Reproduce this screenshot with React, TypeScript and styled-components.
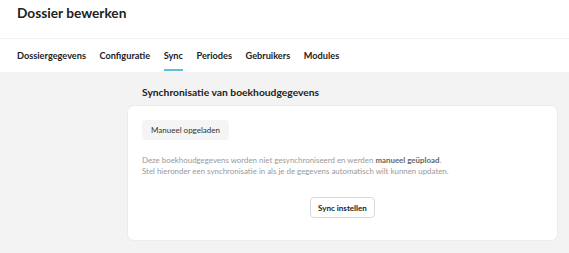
import styled, { createGlobalStyle } from "styled-components";

const GlobalStyle = createGlobalStyle`
  body {
    margin: 0;
    font-family: Lato, "Open Sans", sans-serif;
    color: #222;
    background: #f3f3f3;
  }
`;

const tabs = ["Dossiergegevens", "Configuratie", "Sync", "Periodes", "Gebruikers", "Modules"];

const App = () => {
  return (
    <Page>
      <GlobalStyle />
      <TopBar>
        <Title>Dossier bewerken</Title>
      </TopBar>
      <TabBar>
        {tabs.map((tab) => (
          <Tab key={tab} $active={tab === "Sync"}>
            {tab}
          </Tab>
        ))}
      </TabBar>
      <Content>
        <Section>
          <SectionTitle>Synchronisatie van boekhoudgegevens</SectionTitle>
          <Card>
            <StatusChip>Manueel opgeladen</StatusChip>
            <Description>
              Deze boekhoudgegevens worden niet gesynchroniseerd en werden{" "}
              <strong>manueel geüpload</strong>.
              <br />
              Stel hieronder een synchronisatie in als je de gegevens automatisch wilt kunnen updaten.
            </Description>
            <Actions>
              <OutlineButton>Sync instellen</OutlineButton>
            </Actions>
          </Card>
        </Section>
      </Content>
    </Page>
  );
};

const Page = styled.div`
  min-height: 100vh;
  display: flex;
  flex-direction: column;
`;

const TopBar = styled.div`
  background: #fff;
  height: 38px;
  padding: 0 17px;
  border-bottom: 1px solid #f2f2f2;
`;

const Title = styled.h1`
  margin: 0;
  padding-top: 4px;
  font-size: 13.7px;
  line-height: 18px;
  font-weight: 700;
  color: #222;
`;

const TabBar = styled.nav`
  background: #fff;
  height: 33px;
  padding: 0 17px;
  display: flex;
  gap: 13.5px;
`;

const Tab = styled.div<{ $active?: boolean }>`
  padding-top: 11px;
  font-size: 9.2px;
  line-height: 12px;
  font-weight: 700;
  color: #222;
  border-bottom: 2px solid ${(p) => (p.$active ? "#5bbfde" : "transparent")};
  margin-bottom: 1px;
`;

const Content = styled.main`
  flex: 1;
  background: #f3f3f3;
  padding: 13px 12px 13px 128px;
`;

const Section = styled.section`
  display: flex;
  flex-direction: column;
`;

const SectionTitle = styled.h2`
  margin: 0 0 7px 14px;
  font-size: 10.3px;
  font-weight: 700;
  color: #222;
  line-height: 14px;
`;

const Card = styled.div`
  background: #fff;
  border-radius: 6px;
  box-shadow: 0 0 0 1px #ececec;
  padding: 14px 14px 22px;
  display: flex;
  flex-direction: column;
  align-items: flex-start;
`;

const StatusChip = styled.div`
  background: #f5f5f5;
  border-radius: 4px;
  padding: 0 9px;
  height: 20px;
  line-height: 20px;
  font-size: 8px;
  color: #333;
`;

const Description = styled.p`
  margin: 15px 0 0;
  font-size: 7.9px;
  line-height: 11px;
  color: #999;

  strong {
    font-weight: 700;
    color: #666;
  }
`;

const Actions = styled.div`
  align-self: stretch;
  display: flex;
  justify-content: center;
  margin-top: 20px;
`;

const OutlineButton = styled.button`
  font-family: Lato, "Open Sans", sans-serif;
  font-size: 8px;
  font-weight: 700;
  color: #222;
  background: #fff;
  border: 1px solid #d8d8d8;
  border-radius: 4px;
  height: 21px;
  padding: 0 7px;
  cursor: pointer;
`;

export default App;
